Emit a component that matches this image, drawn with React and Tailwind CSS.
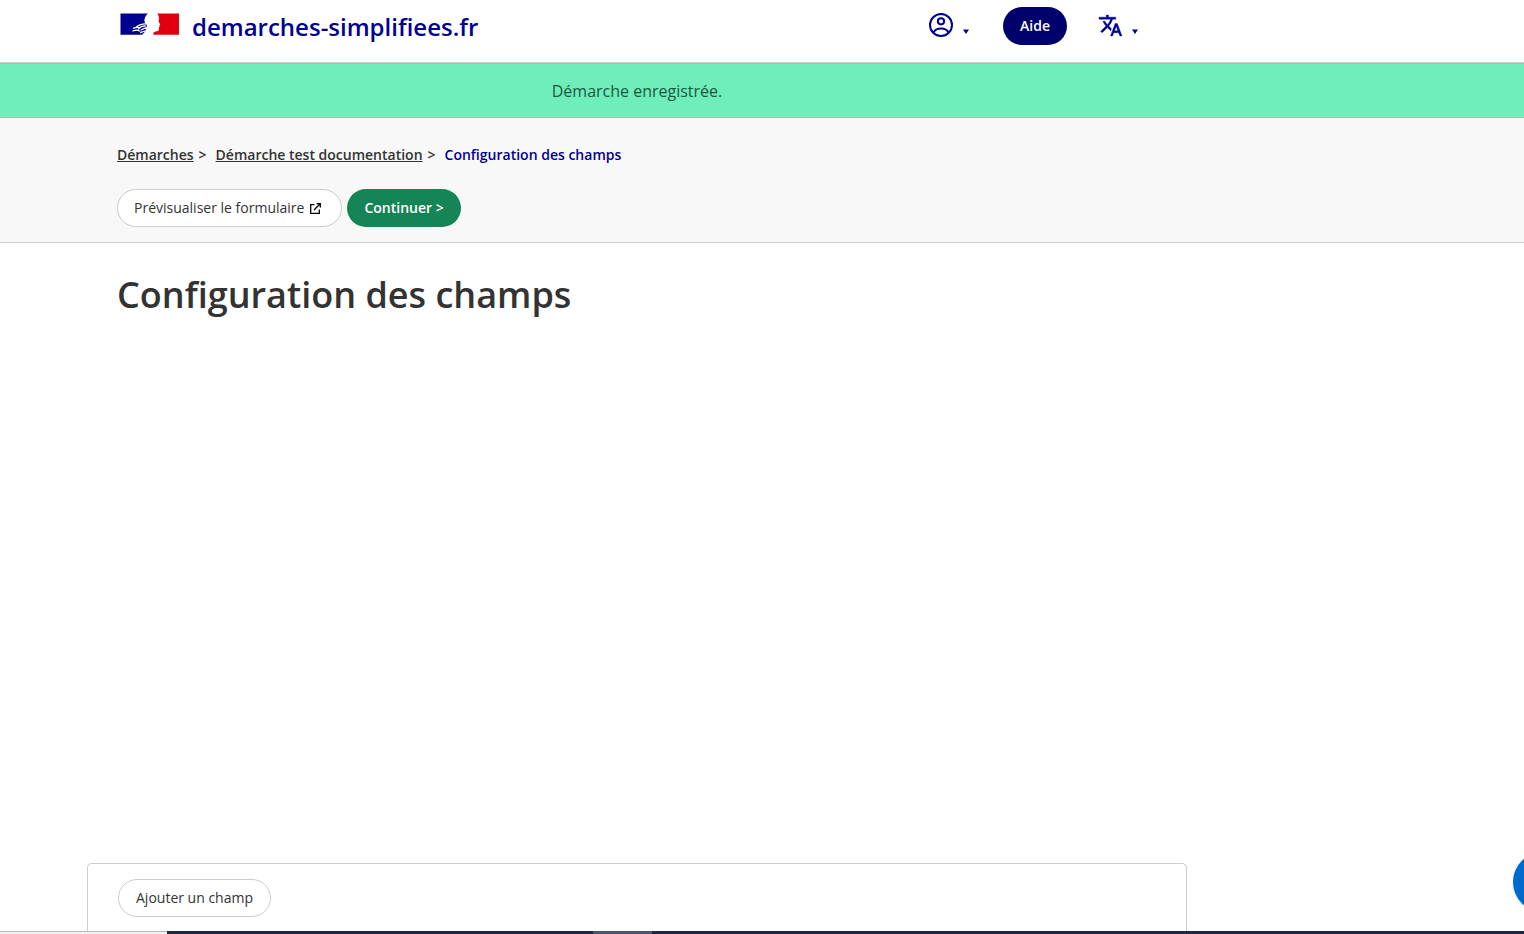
function Marianne() {
  return (
    <svg viewBox="0 0 60 22" className="h-[22px] w-[60px]" aria-hidden="true">
      <path fill="#000091" d="M0.5 0.500H28C26 2 24.600 4.500 24.400 7C24.200 9 25 10 26.500 11.200L27 13L25.400 15.500L26 17.500L24 19.800L22 21.800H0.500Z" />
      <path fill="#e1000f" d="M37.300 0.500H59V21.800H33.500C32.800 20 34 19 35.500 18.600C38 18.200 39 17.600 39 16L38.800 14.200L39.800 13.500L39.300 12.500L40.300 11.500L38.500 8.500C39.300 6 39.200 3 37.300 0.500Z" />
      <path fill="none" stroke="#fff" strokeWidth="1.200" d="M27 11C21 10.500 18.500 12 15.500 14.600M26 13C22 12.600 20 14.200 18 16.400M26 14.600L20.500 17.200M13 15.400C16 14 18 14 20.500 14.600M12.500 18.200C15.500 16.600 18 16.800 20 18.400M20 19.600L26 17.800" />
    </svg>
  );
}

function AccountIcon() {
  return (
    <svg viewBox="0 0 24 24" className="mx-[3px] size-6" fill="none" stroke="#000091" strokeWidth="2" aria-hidden="true">
      <circle cx="12" cy="12" r="11" />
      <circle cx="12" cy="8.300" r="3.100" />
      <path d="M4.500 19.600C6 16.500 8.800 15.600 12 15.600S18 16.500 19.500 19.600" />
    </svg>
  );
}

function TranslateIcon() {
  return (
    <svg viewBox="0 0 24 24" className="size-[25px]" fill="#000091" stroke="#000091" strokeWidth="0.400" aria-hidden="true">
      <path d="m12.870 15.070-2.540-2.510.03-.03A17.520 17.520 0 0 0 14.070 6H17V4h-7V2H8v2H1v1.990h11.170C11.500 7.920 10.440 9.750 9 11.350 8.070 10.320 7.300 9.190 6.690 8h-2c.73 1.630 1.730 3.170 2.980 4.560l-5.090 5.020L4 19l5-5 3.110 3.110.76-2.040zM18.500 10h-2L12 22h2l1.120-3h4.750L21 22h2l-4.500-12zm-2.620 7 1.620-4.330L19.120 17h-3.240z" />
    </svg>
  );
}

function Caret() {
  return (
    <svg viewBox="0 0 6 5" className="mt-3 h-[5px] w-[6px]" aria-hidden="true">
      <path fill="#000091" d="M0 0.500H6L3 5Z" />
    </svg>
  );
}

function ExternalIcon() {
  return (
    <svg viewBox="0 0 11 11" className="size-[11px]" fill="none" stroke="#000" strokeWidth="1.300" aria-hidden="true">
      <path d="M4.500 1.700H0.700V10.300H9.300V6.500M6.500 0.700H10.300V4.500M10.200 0.800L4 7" />
    </svg>
  );
}

export default function App() {
  return (
    <div className="relative flex min-h-screen flex-col overflow-hidden bg-white font-['Open_Sans',sans-serif] text-sm text-[#333]">
      <header className="border-b border-[#ccc] pr-[250px]">
        <div className="mx-auto flex h-[62px] max-w-[1040px] items-start justify-between">
          <a href="#" className="flex items-start gap-3 pt-[13px] pl-[3px] text-[#000091]">
            <Marianne />
            <span className="text-2xl leading-7 font-semibold">demarches-simplifiees.fr</span>
          </a>
          <nav className="flex items-start pt-[7px] pr-[19px]">
            <button type="button" aria-label="Mon compte" className="mr-[34px] flex h-9 items-center gap-[7px]">
              <AccountIcon />
              <Caret />
            </button>
            <button type="button" className="h-[38px] rounded-full bg-[#00006d] px-[17px] font-semibold text-white">
              Aide
            </button>
            <button type="button" aria-label="Langue" className="ml-[31px] flex h-9 items-center gap-[9px]">
              <TranslateIcon />
              <Caret />
            </button>
          </nav>
        </div>
      </header>

      <div role="status" className="flex h-[55px] items-center justify-center border-y border-[#62e6b0] bg-[#6fedbb] pr-[250px] text-base text-[#19583f]">
        Démarche enregistrée.
      </div>

      <section className="border-b border-[#ccc] bg-[#f8f8f8] pr-[250px]">
        <div className="mx-auto max-w-[1040px] pt-[27px] pb-[15px]">
          <nav aria-label="Fil d’Ariane">
            <ol className="flex gap-[9px] leading-5 font-semibold">
              <li className="flex gap-[5px]"><a href="#" className="underline">Démarches</a> &gt;</li>
              <li className="flex gap-[5px]"><a href="#" className="underline">Démarche test documentation</a> &gt;</li>
              <li className="text-[#000091]">Configuration des champs</li>
            </ol>
          </nav>
          <div className="mt-6 flex gap-[5px]">
            <a href="#" className="flex h-[38px] items-center gap-[6px] rounded-full border border-[#ccc] bg-white pr-5 pl-4">
              Prévisualiser le formulaire
              <ExternalIcon />
            </a>
            <a href="#" className="flex h-[38px] items-center rounded-full bg-[#158557] px-[17px] font-semibold text-white">
              Continuer &gt;
            </a>
          </div>
        </div>
      </section>

      <main className="flex grow flex-col justify-between pr-[250px]">
        <div className="mx-auto w-full max-w-[1040px] pt-7">
          <h1 className="text-4xl leading-[48px] font-semibold">Configuration des champs</h1>
        </div>
        <div className="mx-auto w-full max-w-[1100px] rounded-t-[5px] border border-b-0 border-[#ccc] px-[30px] pt-[15px] pb-[17px]">
          <button type="button" className="h-[38px] rounded-full border border-[#ccc] bg-white px-[17px]">
            Ajouter un champ
          </button>
        </div>
      </main>

      <button type="button" aria-label="Ouvrir l’assistance" className="absolute right-[-49px] bottom-[22px] size-[60px] rounded-full bg-[#0069cc] shadow-sm" />

      <div className="absolute inset-x-0 bottom-0 flex h-[3px] bg-[#1a2945]">
        <div className="w-[167px] border-t border-[#b8b8b8] bg-[#f1f1f1]" />
        <div className="ml-[426px] w-[59px] bg-[#4a566e]" />
      </div>
    </div>
  );
}
